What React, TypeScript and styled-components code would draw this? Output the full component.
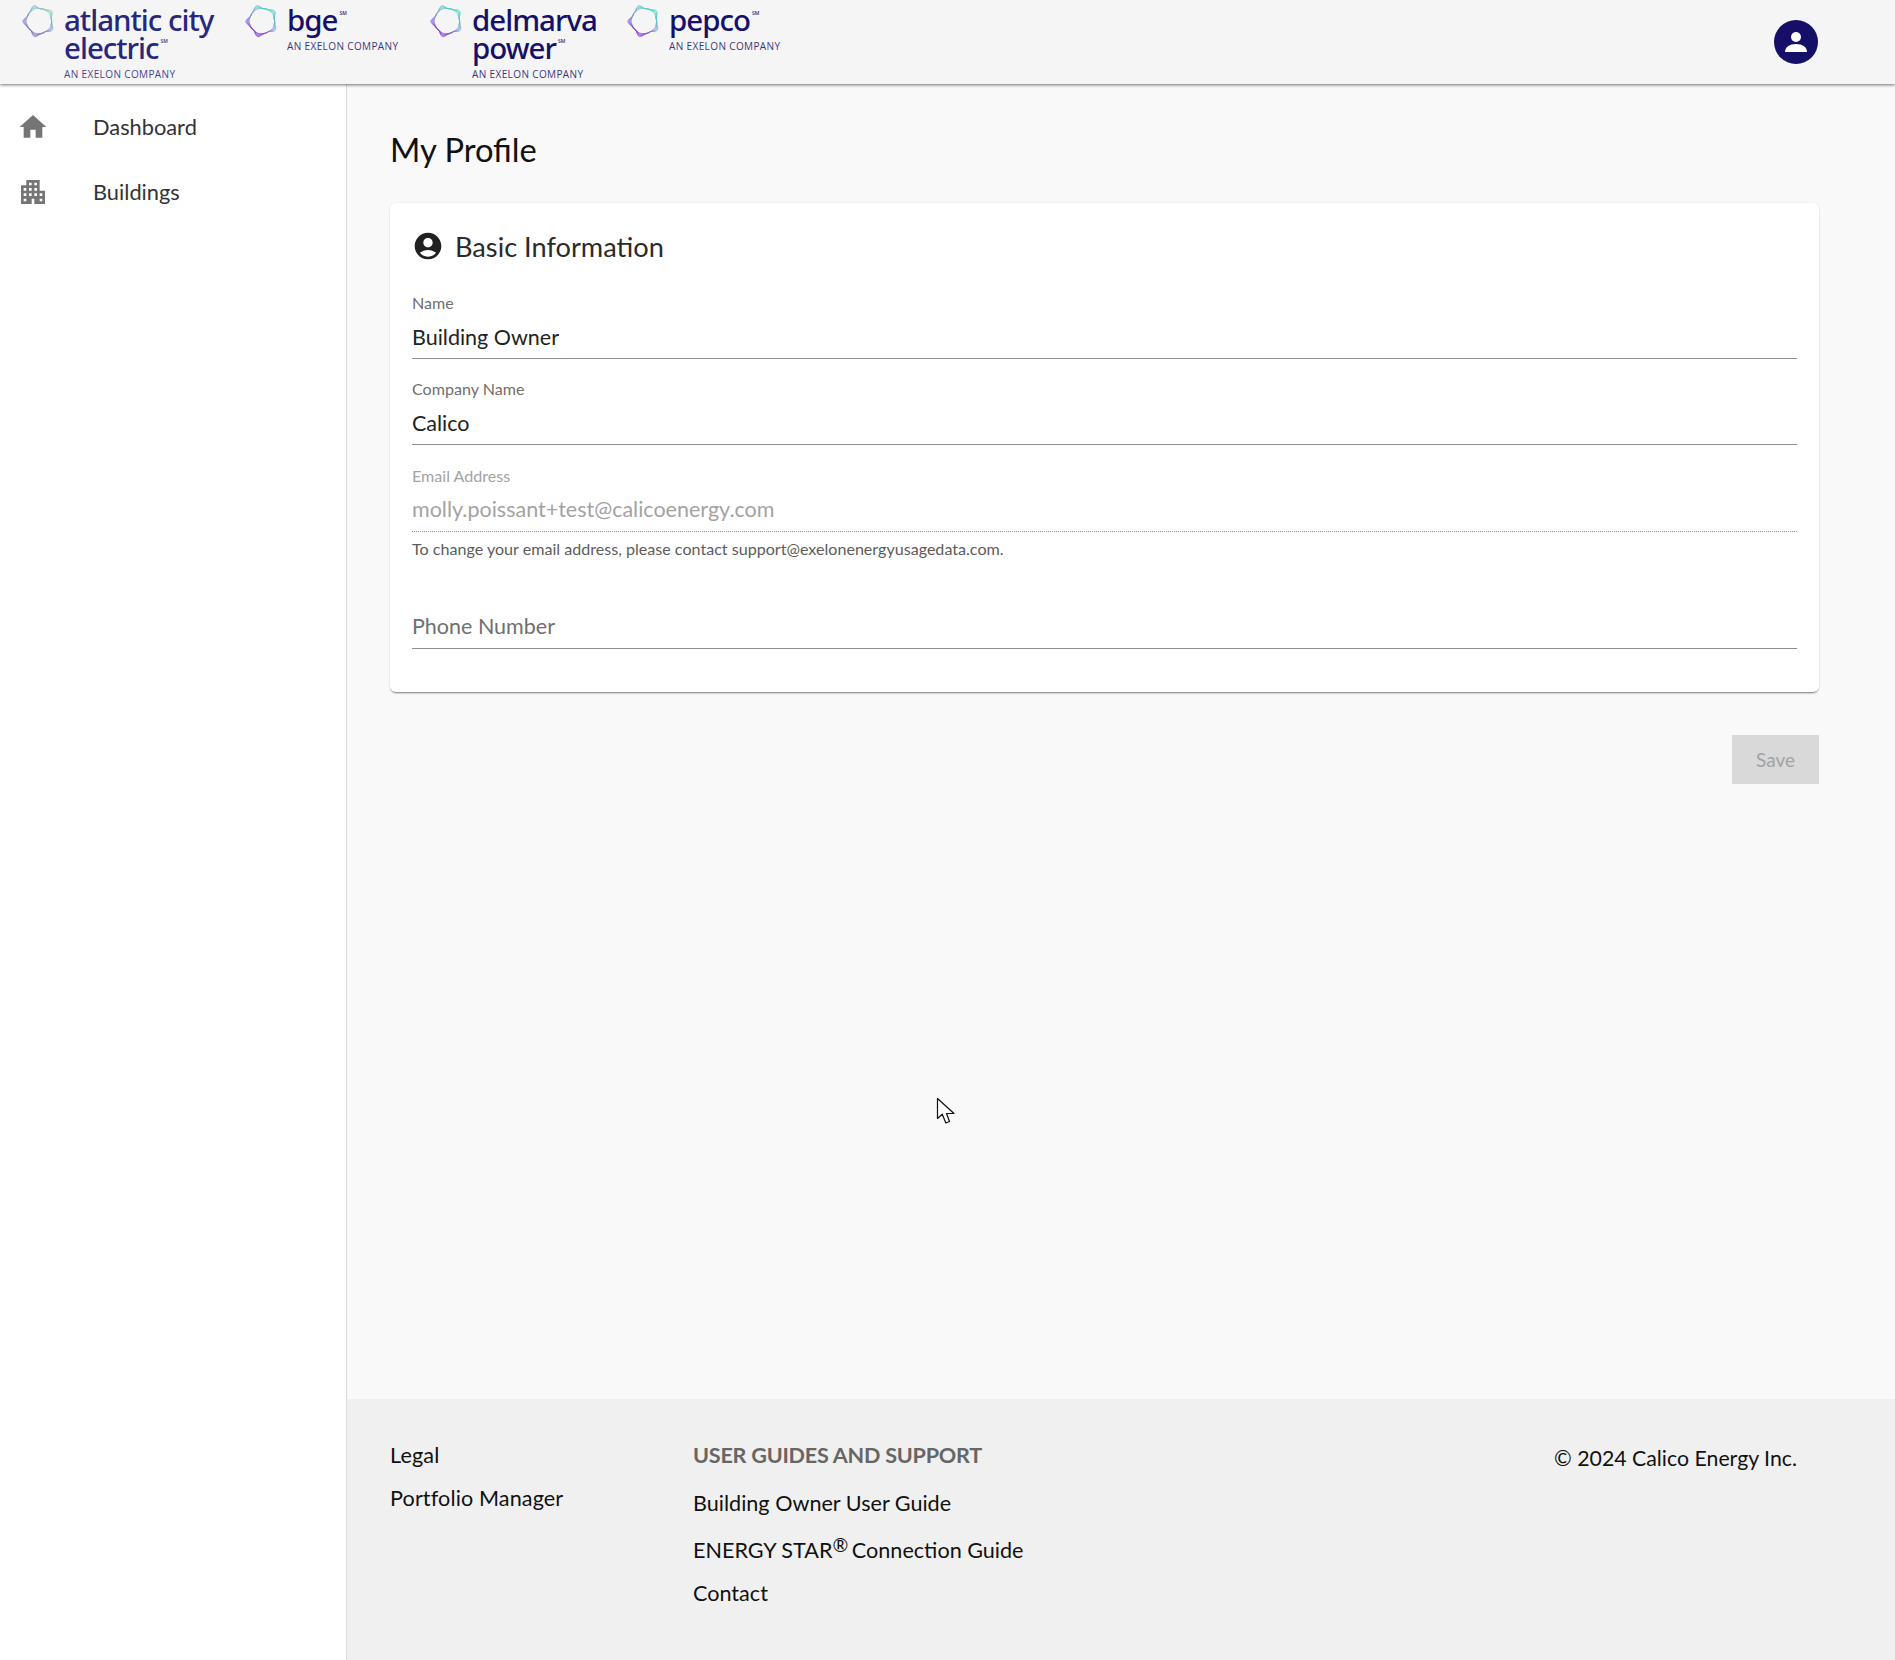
import React from "react";
import styled, { createGlobalStyle } from "styled-components";

const Global = createGlobalStyle`
  html, body { margin: 0; padding: 0; }
  body { font-family: Lato, "Liberation Sans", sans-serif; background: #f9f9f9; color: #222; }
`;

const Page = styled.div`
  position: relative;
  display: flex;
  flex-direction: column;
  min-height: 100vh;
  overflow: hidden;
`;

const Header = styled.header`
  position: relative;
  z-index: 2;
  display: flex;
  justify-content: space-between;
  height: 84px;
  padding: 4px 77px 0 22px;
  box-sizing: border-box;
  background: #f5f5f5;
  box-shadow: 0 1px 3px rgba(0, 0, 0, 0.55);
`;

const LogoRow = styled.div`
  display: flex;
`;

const LogoItem = styled.div<{ $width: number }>`
  display: flex;
  gap: 8px;
  width: ${(p) => p.$width}px;
`;

const LogoRing = styled.svg`
  flex: none;
  width: 34px;
  height: 34px;
`;

const LogoText = styled.div<{ $color: string }>`
  color: ${(p) => p.$color};
  padding-top: 2px;
`;

const LogoLine = styled.div<{ $size: number; $spacing: number }>`
  font-family: "Noto Sans", sans-serif;
  font-weight: 500;
  font-size: ${(p) => p.$size}px;
  letter-spacing: ${(p) => p.$spacing}px;
  line-height: 28px;
  white-space: nowrap;
`;

const ServiceMark = styled.sup`
  font-size: 5px;
  line-height: 0;
  vertical-align: 16px;
  letter-spacing: 0;
  margin-left: 2px;
`;

const LogoSub = styled.div`
  font-family: "Open Sans", sans-serif;
  font-size: 10px;
  letter-spacing: 0.38px;
  line-height: 14px;
  margin-top: 5px;
  white-space: nowrap;
  opacity: 0.85;
`;

const Avatar = styled.div`
  display: flex;
  align-items: center;
  justify-content: center;
  width: 44px;
  height: 44px;
  margin-top: 16px;
  border-radius: 50%;
  background: #160f68;
`;

const Body = styled.div`
  display: flex;
  flex: 1;
`;

const Sidebar = styled.nav`
  flex: none;
  width: 347px;
  box-sizing: border-box;
  padding-top: 10px;
  background: #fff;
  border-right: 1px solid #dcdcdc;
`;

const NavItem = styled.div`
  display: flex;
  align-items: center;
  gap: 44px;
  height: 65px;
  padding-left: 17px;
  font-size: 21.8px;
  color: #333;
`;

const NavIcon = styled.svg`
  flex: none;
  width: 32px;
  height: 32px;
  fill: #757575;
`;

const Column = styled.div`
  display: flex;
  flex: 1;
  flex-direction: column;
  min-width: 0;
`;

const Main = styled.main`
  flex: 1;
  padding: 46px 76px 0 43px;
`;

const Title = styled.h1`
  margin: 0 0 33px;
  font-size: 32.7px;
  font-weight: 400;
  line-height: 40px;
  color: #111;
`;

const Card = styled.section`
  box-sizing: border-box;
  height: 489px;
  padding: 28px 22px 0;
  background: #fff;
  border-radius: 6px;
  box-shadow: 0 2px 2px -1px rgba(0, 0, 0, 0.5), 0 0 3px rgba(0, 0, 0, 0.07);
`;

const CardHead = styled.div`
  display: flex;
  align-items: center;
  gap: 11px;
  height: 32px;
  margin-bottom: 30px;
`;

const CardIcon = styled.svg`
  flex: none;
  width: 32px;
  height: 32px;
  margin-top: -2px;
  fill: #212121;
`;

const CardTitle = styled.h2`
  margin: 0;
  font-size: 27.2px;
  font-weight: 400;
  line-height: 36px;
  color: #2a2a2a;
`;

const Field = styled.div<{ $top?: number }>`
  margin-top: ${(p) => p.$top ?? 0}px;
`;

const FieldLabel = styled.div<{ $disabled?: boolean }>`
  height: 20px;
  margin-bottom: 10px;
  font-size: 16.1px;
  line-height: 20px;
  color: ${(p) => (p.$disabled ? "#a3a3a3" : "#6f6f6f")};
`;

const FieldValue = styled.div<{ $tone: string; $dotted?: boolean; $lift?: boolean }>`
  height: 28px;
  padding-bottom: 7px;
  font-size: 21.5px;
  line-height: ${(p) => (p.$lift ? 26 : 28)}px;
  color: ${(p) => p.$tone};
  border-bottom: 1px ${(p) => (p.$dotted ? "dotted" : "solid")} #8f8f8f;
`;

const Helper = styled.p`
  margin: 7px 0 0;
  font-size: 16.1px;
  line-height: 20px;
  color: #5c5c5c;
`;

const Actions = styled.div`
  display: flex;
  justify-content: flex-end;
  margin-top: 43px;
`;

const SaveButton = styled.button`
  width: 87px;
  height: 49px;
  border: 0;
  background: #d9d9d9;
  font-family: inherit;
  font-size: 19px;
  color: #a3a3a3;
`;

const Footer = styled.footer`
  display: flex;
  height: 261px;
  box-sizing: border-box;
  padding: 42px 98px 0 43px;
  background: #f0f0f0;
  font-size: 21.6px;
  line-height: 28px;
  color: #111;
`;

const FooterLeft = styled.div`
  display: flex;
  flex: none;
  flex-direction: column;
  gap: 15px;
  width: 303px;
  letter-spacing: 0.12px;
`;

const FooterLinks = styled.div`
  display: flex;
  flex: 1;
  flex-direction: column;
  gap: 14px;
`;

const FooterHeading = styled.div`
  margin-bottom: 6px;
  font-weight: 700;
  letter-spacing: -0.24px;
  color: #666;
`;

const TallLink = styled.div`
  padding-top: 5px;
  margin-bottom: 1px;
`;

const Registered = styled.sup`
  font-size: 19px;
  line-height: 0;
  vertical-align: 6px;
  margin-right: -2px;
`;

const Copyright = styled.div`
  padding-top: 3px;
  font-size: 21.3px;
`;

const Cursor = styled.svg`
  position: absolute;
  left: 936px;
  top: 1097px;
  width: 20px;
  height: 28px;
`;

function ringPath(amp: number, phase: number, base: number) {
  const pts: string[] = [];
  for (let i = 0; i < 180; i++) {
    const t = (i / 180) * Math.PI * 2;
    const lobe = Math.pow((1 + Math.cos(5 * (t - phase))) / 2, 2);
    const wave = 0.3 * Math.sin(10 * t + phase * 6);
    const r = base + amp * lobe + wave * (amp / 4);
    pts.push(`${(17 + r * Math.sin(t)).toFixed(2)} ${(17 - r * Math.cos(t)).toFixed(2)}`);
  }
  return "M" + pts.join("L") + "Z";
}

const ringCurves = [
  [0.2, -0.4],
  [0.8, -0.3],
  [1.4, -0.46],
  [2.0, -0.32],
  [2.6, -0.42],
  [3.1, -0.34],
  [3.6, -0.38],
].map(([a, p]) => ringPath(a, p, 12.5));

function Ring({ id, from, to }: { id: string; from: string; to: string }) {
  return (
    <LogoRing viewBox="0 0 34 34">
      <defs>
        <linearGradient id={id} x1="0.85" y1="0.05" x2="0.25" y2="0.95">
          <stop offset="0" stopColor={from} />
          <stop offset="0.5" stopColor="#7f9fd0" />
          <stop offset="1" stopColor={to} />
        </linearGradient>
      </defs>
      {ringCurves.map((d) => (
        <path key={d} d={d} fill="none" stroke={`url(#${id})`} strokeWidth="0.5" />
      ))}
    </LogoRing>
  );
}

function Logo({
  id,
  lines,
  width,
  color,
  muted,
}: {
  id: string;
  lines: string[];
  width: number;
  color: string;
  muted?: boolean;
}) {
  return (
    <LogoItem $width={width}>
      <Ring id={id} from={muted ? "#86d3be" : "#3fdcc0"} to={muted ? "#7a63b8" : "#7a22d6"} />
      <LogoText $color={color}>
        {lines.map((l, i) => (
          <LogoLine key={l} $size={29.5} $spacing={-1}>
            {l}
            {i === lines.length - 1 && <ServiceMark>SM</ServiceMark>}
          </LogoLine>
        ))}
        <LogoSub>AN EXELON COMPANY</LogoSub>
      </LogoText>
    </LogoItem>
  );
}

export default function App() {
  return (
    <Page>
      <Global />
      <Header>
        <LogoRow>
          <Logo id="r1" muted lines={["atlantic city", "electric"]} width={223} color="#27277d" />
          <Logo id="r2" lines={["bge"]} width={185} color="#17106a" />
          <Logo id="r3" lines={["delmarva", "power"]} width={197} color="#17106a" />
          <Logo id="r4" lines={["pepco"]} width={160} color="#17106a" />
        </LogoRow>
        <Avatar>
          <svg width="24" height="24" viewBox="0 0 24 24" fill="#fff">
            <circle cx="12" cy="7" r="5" />
            <path d="M1 22c0-5 4.500-8 11-8s11 3 11 8z" />
          </svg>
        </Avatar>
      </Header>
      <Body>
        <Sidebar>
          <NavItem>
            <NavIcon viewBox="0 0 24 24">
              <path d="M10 20v-6h4v6h5v-8h3L12 3 2 12h3v8z" />
            </NavIcon>
            Dashboard
          </NavItem>
          <NavItem>
            <NavIcon viewBox="0 0 24 24">
              <path d="M17 11V3H7v4H3v14h8v-4h2v4h8V11h-4zM7 19H5v-2h2v2zm0-4H5v-2h2v2zm0-4H5V9h2v2zm4 4H9v-2h2v2zm0-4H9V9h2v2zm0-4H9V5h2v2zm4 8h-2v-2h2v2zm0-4h-2V9h2v2zm0-4h-2V5h2v2zm4 12h-2v-2h2v2zm0-4h-2v-2h2v2z" />
            </NavIcon>
            Buildings
          </NavItem>
        </Sidebar>
        <Column>
          <Main>
            <Title>My Profile</Title>
            <Card>
              <CardHead>
                <CardIcon viewBox="0 0 24 24">
                  <path d="M12 2C6.48 2 2 6.48 2 12s4.480 10 10 10 10-4.480 10-10S17.520 2 12 2zm0 4c1.930 0 3.500 1.570 3.500 3.500S13.930 13 12 13s-3.500-1.570-3.500-3.500S10.070 6 12 6zm0 14c-2.030 0-4.430-.82-6.140-2.880C7.550 15.800 9.680 15 12 15s4.450.8 6.140 2.120C16.430 19.180 14.030 20 12 20z" />
                </CardIcon>
                <CardTitle>Basic Information</CardTitle>
              </CardHead>
              <Field>
                <FieldLabel>Name</FieldLabel>
                <FieldValue $tone="#222">Building Owner</FieldValue>
              </Field>
              <Field $top={20}>
                <FieldLabel>Company Name</FieldLabel>
                <FieldValue $tone="#222">Calico</FieldValue>
              </Field>
              <Field $top={21}>
                <FieldLabel $disabled>Email Address</FieldLabel>
                <FieldValue $tone="#a3a3a3" $dotted $lift>
                  molly.poissant+test@calicoenergy.com
                </FieldValue>
              </Field>
              <Helper>To change your email address, please contact support@exelonenergyusagedata.com.</Helper>
              <Field $top={54}>
                <FieldValue $tone="#6f6f6f" $lift>Phone Number</FieldValue>
              </Field>
            </Card>
            <Actions>
              <SaveButton disabled>Save</SaveButton>
            </Actions>
          </Main>
          <Footer>
            <FooterLeft>
              <div>Legal</div>
              <div>Portfolio Manager</div>
            </FooterLeft>
            <FooterLinks>
              <FooterHeading>USER GUIDES AND SUPPORT</FooterHeading>
              <div>Building Owner User Guide</div>
              <TallLink>
                ENERGY STAR<Registered>®</Registered> Connection Guide
              </TallLink>
              <div>Contact</div>
            </FooterLinks>
            <Copyright>© 2024 Calico Energy Inc.</Copyright>
          </Footer>
        </Column>
      </Body>
      <Cursor viewBox="0 0 20 28">
        <path d="M1.500 1.500V21.500L6.300 17.200L9.800 26L13.500 24.500L10.500 16.500H18Z" fill="#fff" stroke="#111" strokeWidth="1.200" strokeLinejoin="round" />
      </Cursor>
    </Page>
  );
}
